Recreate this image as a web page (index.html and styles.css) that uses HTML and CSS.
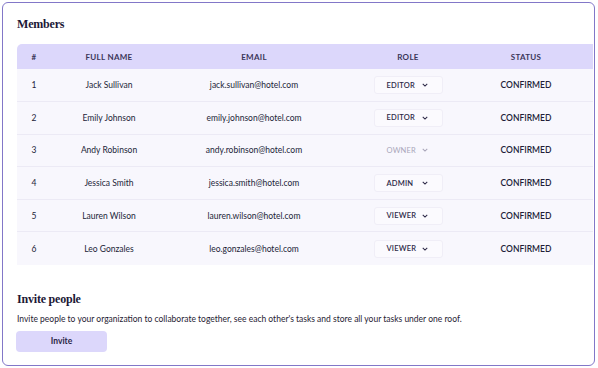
FILE: index.html
```html
<!DOCTYPE html>
<html lang="en">
<head>
    <meta charset="UTF-8">
    <meta name="viewport" content="width=device-width, initial-scale=1.0">
    <title>Members</title>
    <link rel="stylesheet" href="styles.css">
</head>
<body>
    <div class="members-card">
        <h2 class="section-title">Members</h2>
        <table class="members-table">
            <colgroup>
                <col class="col-num">
                <col class="col-name">
                <col class="col-email">
                <col class="col-role">
                <col class="col-status">
            </colgroup>
            <thead>
                <tr>
                    <th>#</th>
                    <th>Full Name</th>
                    <th>Email</th>
                    <th>Role</th>
                    <th class="status-cell">Status</th>
                </tr>
            </thead>
            <tbody>
                <tr>
                    <td>1</td>
                    <td>Jack Sullivan</td>
                    <td>jack.sullivan@hotel.com</td>
                    <td><span class="role-select">Editor <svg class="chevron" viewBox="0 0 8 5"><path d="M1 1l3 3 3-3"/></svg></span></td>
                    <td class="status-cell">Confirmed</td>
                </tr>
                <tr>
                    <td>2</td>
                    <td>Emily Johnson</td>
                    <td>emily.johnson@hotel.com</td>
                    <td><span class="role-select">Editor <svg class="chevron" viewBox="0 0 8 5"><path d="M1 1l3 3 3-3"/></svg></span></td>
                    <td class="status-cell">Confirmed</td>
                </tr>
                <tr>
                    <td>3</td>
                    <td>Andy Robinson</td>
                    <td>andy.robinson@hotel.com</td>
                    <td><span class="role-select disabled">Owner <svg class="chevron" viewBox="0 0 8 5"><path d="M1 1l3 3 3-3"/></svg></span></td>
                    <td class="status-cell">Confirmed</td>
                </tr>
                <tr>
                    <td>4</td>
                    <td>Jessica Smith</td>
                    <td>jessica.smith@hotel.com</td>
                    <td><span class="role-select">Admin <svg class="chevron" viewBox="0 0 8 5"><path d="M1 1l3 3 3-3"/></svg></span></td>
                    <td class="status-cell">Confirmed</td>
                </tr>
                <tr>
                    <td>5</td>
                    <td>Lauren Wilson</td>
                    <td>lauren.wilson@hotel.com</td>
                    <td><span class="role-select">Viewer <svg class="chevron" viewBox="0 0 8 5"><path d="M1 1l3 3 3-3"/></svg></span></td>
                    <td class="status-cell">Confirmed</td>
                </tr>
                <tr>
                    <td>6</td>
                    <td>Leo Gonzales</td>
                    <td>leo.gonzales@hotel.com</td>
                    <td><span class="role-select">Viewer <svg class="chevron" viewBox="0 0 8 5"><path d="M1 1l3 3 3-3"/></svg></span></td>
                    <td class="status-cell">Confirmed</td>
                </tr>
            </tbody>
        </table>

        <div class="invite-section">
            <h2 class="section-title">Invite people</h2>
            <p class="invite-text">Invite people to your organization to collaborate together, see each other's tasks and store all your tasks under one roof.</p>
            <button class="invite-btn">Invite</button>
        </div>
    </div>
</body>
</html>
```

FILE: styles.css
```css
* {
    margin: 0;
    padding: 0;
    box-sizing: border-box;
}

body {
    background: #ffffff;
    font-family: 'Lato', 'Noto Sans', sans-serif;
    color: #24203b;
    padding: 2px 3px 2px 2px;
}

.members-card {
    border: 1.5px solid #8277c8;
    border-radius: 6px;
    padding: 14px 1px 12px 14px;
    height: 364px;
}

.section-title {
    font-family: 'Liberation Serif', serif;
    font-size: 12px;
    font-weight: 700;
    color: #1c1836;
    line-height: 14px;
    letter-spacing: -0.2px;
}

.members-table {
    width: 100%;
    margin-top: 13px;
    border-collapse: collapse;
    table-layout: fixed;
    font-size: 8.5px;
}

.col-num { width: 34px; }
.col-name { width: 116px; }
.col-email { width: 174px; }
.col-role { width: 134px; }

.members-table th {
    background: #dcd7fb;
    height: 25px;
    font-weight: 700;
    text-transform: uppercase;
    color: #3a3558;
    font-size: 8px;
    letter-spacing: 0.3px;
}

.members-table th:first-child {
    border-top-left-radius: 5px;
}

.members-table td {
    height: 32.6px;
    text-align: center;
    background: #f8f7fd;
    border-top: 1px solid #eceaf5;
    color: #221e38;
}

.members-table tbody tr:first-child td {
    border-top: none;
}

.status-cell {
    padding-right: 16px;
    text-transform: uppercase;
    font-weight: 600;
}

.role-select {
    display: inline-flex;
    align-items: center;
    justify-content: space-between;
    width: 69px;
    height: 18px;
    padding: 0 14px 0 12px;
    border: 1px solid #f0eef7;
    border-radius: 3px;
    background: #fbfafe;
    text-transform: uppercase;
    font-size: 7.5px;
    font-weight: 600;
    color: #2d2947;
    letter-spacing: 0.2px;
}

.role-select.disabled {
    border-color: transparent;
    background: transparent;
    color: #a9a6ba;
    font-weight: 400;
}

.chevron {
    width: 6px;
    height: 4px;
    fill: none;
    stroke: currentColor;
    stroke-width: 1.4;
}

.invite-section {
    margin-top: 27px;
}

.invite-text {
    font-size: 8.5px;
    margin-top: 8px;
    color: #1f1b33;
}

.invite-btn {
    margin-top: 7px;
    margin-left: -1px;
    width: 91px;
    height: 21px;
    border: none;
    border-radius: 4px;
    background: #dcd7fb;
    font-family: 'Lato', sans-serif;
    font-size: 8.5px;
    font-weight: 700;
    color: #2a2645;
}
```
